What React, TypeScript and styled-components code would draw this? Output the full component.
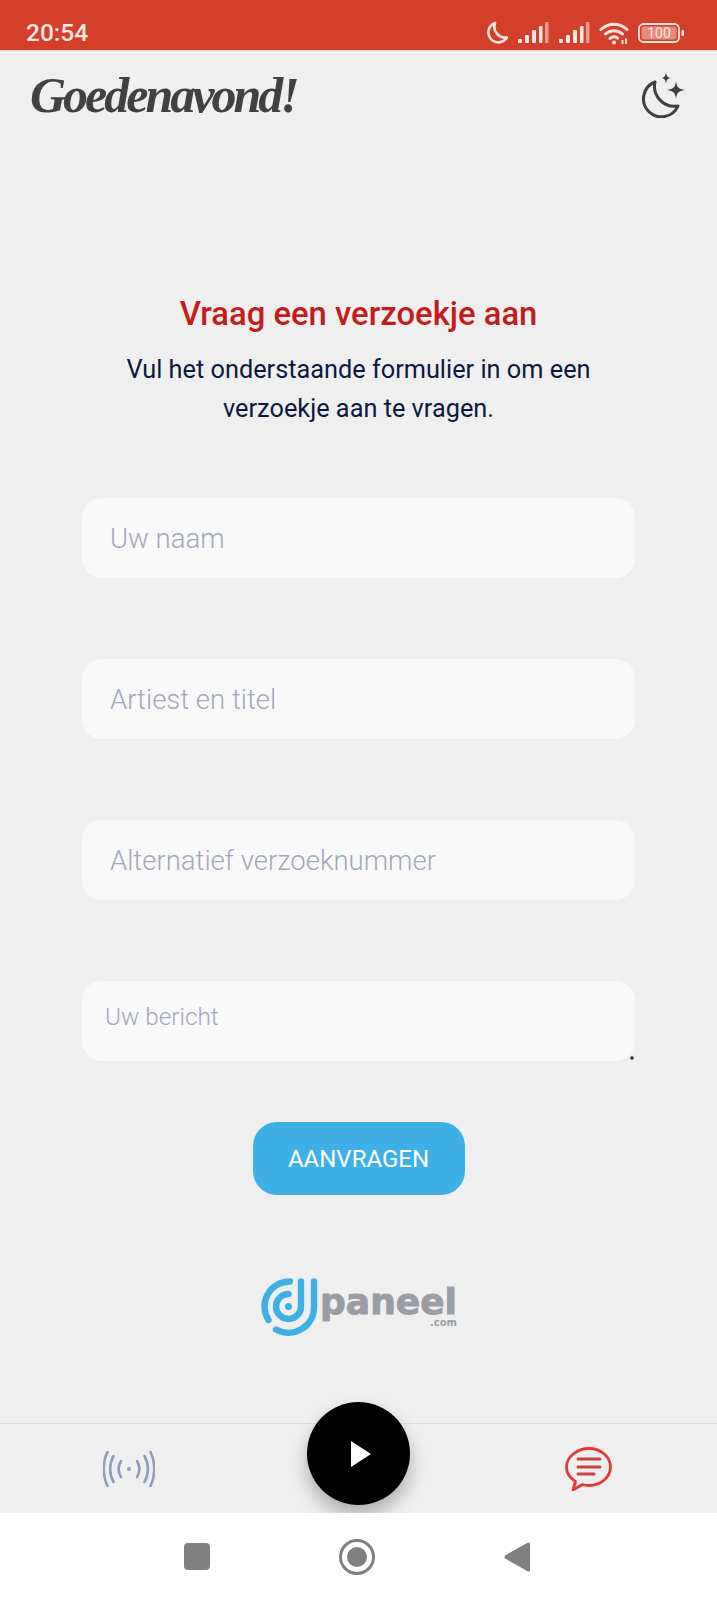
import React from "react";
import styled, { createGlobalStyle } from "styled-components";

const GlobalStyle = createGlobalStyle`
  * { box-sizing: border-box; }
  body {
    margin: 0;
    background: #efefef;
    font-family: Roboto, "Liberation Sans", sans-serif;
  }
`;

const Page = styled.div`
  width: 717px;
  height: 1600px;
  display: flex;
  flex-direction: column;
  background: #efefef;
  overflow: hidden;
`;

const StatusBar = styled.div`
  height: 51px;
  flex: none;
  padding: 15px 33px 0 26px;
  display: flex;
  align-items: center;
  justify-content: space-between;
  background: #d23f2b;
  border-bottom: 1px solid #f0c9c0;
  color: #fbe6df;
`;

const Clock = styled.span`
  font-size: 24.5px;
  font-weight: 500;
`;

const StatusIcons = styled.div`
  display: flex;
  align-items: center;
  gap: 9px;
`;

const Header = styled.header`
  height: 90px;
  flex: none;
  padding: 0 31px 2px 30px;
  display: flex;
  align-items: center;
  justify-content: space-between;
`;

const Greeting = styled.h1`
  margin: 0;
  font-family: "Liberation Serif", serif;
  font-size: 50px;
  font-style: italic;
  font-weight: 700;
  letter-spacing: -3px;
  color: #414141;
`;

const Main = styled.main`
  flex: 1;
  padding-top: 154px;
  display: flex;
  flex-direction: column;
  align-items: center;
`;

const Title = styled.h2`
  margin: 0 0 17px;
  font-size: 32.8px;
  line-height: 38px;
  font-weight: 500;
  color: #c41c1c;
`;

const Intro = styled.p`
  width: 500px;
  margin: 0 0 70px;
  font-size: 25.3px;
  line-height: 39px;
  text-align: center;
  color: #0c1a3e;
`;

const Form = styled.form`
  width: 553px;
  display: flex;
  flex-direction: column;
  align-items: center;
  gap: 81px;
`;

const TextInput = styled.input`
  width: 100%;
  height: 80px;
  padding: 0 28px;
  border: 0;
  border-radius: 20px;
  background: #f9f9f9;
  font-family: Roboto, sans-serif;
  font-size: 27.5px;
  font-weight: 300;
  outline: none;

  &::placeholder {
    color: #a2a8ba;
    opacity: 1;
  }
`;

const TextArea = styled.textarea`
  display: block;
  width: 100%;
  height: 80px;
  padding: 21px 23px;
  border: 0;
  border-radius: 20px;
  background: #f9f9f9;
  font-family: Roboto, sans-serif;
  font-size: 24.3px;
  font-weight: 300;
  outline: none;

  &::placeholder {
    color: #a2a8ba;
    opacity: 1;
  }

  &::-webkit-resizer {
    background: radial-gradient(circle at 12px 12px, #444 0 1.5px, transparent 2px);
  }
`;

const SubmitButton = styled.button`
  width: 212px;
  height: 73px;
  margin-top: -20px;
  border: 0;
  border-radius: 24px;
  background: #3eb0e6;
  color: #fff;
  font-family: Roboto, sans-serif;
  font-size: 24px;
  font-weight: 400;
`;

const Brand = styled.div`
  margin-top: 82px;
  display: flex;
  align-items: flex-start;
  gap: 2px;
`;

const BrandText = styled.div`
  display: flex;
  flex-direction: column;
  align-items: flex-end;
  padding-top: 11px;
  font-family: "DejaVu Sans", sans-serif;
  font-weight: 700;
  color: #9a9da3;
`;

const BrandName = styled.span`
  font-size: 36px;
  line-height: 27px;
  -webkit-text-stroke: 1px #9a9da3;
`;

const BrandDomain = styled.span`
  margin-top: 3px;
  font-size: 10px;
  line-height: 10px;
`;

const TabBar = styled.nav`
  position: relative;
  height: 90px;
  flex: none;
  padding: 0 105px 8px 103px;
  display: flex;
  align-items: flex-end;
  justify-content: space-between;
  border-top: 1px solid #dfdfdf;
`;

const TabIcon = styled.div`
  height: 56px;
  padding-bottom: 16px;
  display: flex;
  align-items: center;
`;

const PlayButton = styled.button`
  position: absolute;
  left: 307px;
  top: -22px;
  width: 103px;
  height: 103px;
  padding: 0 0 0 4px;
  border: 0;
  border-radius: 50%;
  display: flex;
  align-items: center;
  justify-content: center;
  background: #000;
  box-shadow: 0 10px 18px rgba(0, 0, 0, 0.28);
`;

const SystemNav = styled.div`
  position: relative;
  height: 87px;
  flex: none;
  padding: 0 187px 0 184px;
  display: flex;
  align-items: center;
  justify-content: space-between;
  background: #fff;
`;

const MoonIcon = () => (
  <svg width="23" height="24" viewBox="0 0 23 24" fill="none">
    <path
      d="M10 2A10 10 0 1 0 22 16.500 11 11 0 0 1 10 2Z"
      stroke="currentColor"
      strokeWidth="2.600"
      strokeLinejoin="round"
    />
  </svg>
);

const SignalIcon = () => (
  <svg width="32" height="24" viewBox="0 0 32 24" fill="currentColor">
    <rect x="1" y="18" width="4" height="4" rx="1" />
    <rect x="8" y="14" width="4" height="8" rx="1" />
    <rect x="15" y="9" width="4" height="13" rx="1" />
    <rect x="22" y="5" width="3.500" height="17" rx="1" />
    <rect x="28" y="1" width="3.500" height="21" rx="0.500" fill="#ef9a8a" />
  </svg>
);

const WifiIcon = () => (
  <svg width="30" height="24" viewBox="0 0 30 24" fill="none" stroke="currentColor" strokeWidth="3" strokeLinecap="round">
    <path d="M2 8.500C9.500 1.500 20.500 1.500 28 8.500" />
    <path d="M6.500 13C11.500 8.500 18.500 8.500 23.500 13" />
    <path d="M11 17.500C13.500 15.500 16.500 15.500 18.500 17" />
    <circle cx="15" cy="21.500" r="1.600" fill="currentColor" strokeWidth="1" />
    <path d="M23.500 19V23M27 17.500V23" strokeWidth="2" strokeLinecap="butt" />
  </svg>
);

const BatteryIcon = () => (
  <svg width="46" height="20" viewBox="0 0 46 20" fill="none">
    <rect x="1" y="1" width="40" height="18" rx="4.500" stroke="currentColor" strokeWidth="1.800" />
    <rect x="3.500" y="3.500" width="35" height="13" rx="2.500" fill="#e8897a" />
    <rect x="43.500" y="7" width="2.500" height="6" rx="1" fill="currentColor" />
    <text x="21" y="15" textAnchor="middle" fontFamily="Roboto, sans-serif" fontSize="14" fill="currentColor">
      100
    </text>
  </svg>
);

const ThemeIcon = () => (
  <svg width="46" height="46" viewBox="0 0 46 46" fill="none">
    <path
      d="M15 10A18 18 0 1 0 38 34 20 20 0 0 1 15 10Z"
      stroke="#3f3f3f"
      strokeWidth="3"
      strokeLinejoin="round"
    />
    <path d="M26 0C26.600 4.400 27.400 5.400 31 6 27.400 6.600 26.600 7.600 26 12 25.400 7.600 24.600 6.600 21 6 24.600 5.400 25.400 4.400 26 0Z" fill="#3f3f3f" />
    <path d="M36 9C36.800 15 38 16.800 45 18 38 19.200 36.800 21 36 27 35.200 21 34 19.200 27 18 34 16.800 35.200 15 36 9Z" fill="#3f3f3f" />
  </svg>
);

const BrandMark = () => (
  <svg width="58" height="60" viewBox="0 0 58 60" fill="none" stroke="#3eb0e6" strokeWidth="6.400" strokeLinecap="round">
    <path d="M30 4.500A25 25 0 0 0 8.500 43" />
    <path d="M54 4.500V29.500A25.500 25.500 0 0 1 16 52.500" />
    <path d="M41 4.500V29.500A12.500 12.500 0 1 1 28.500 17" />
    <circle cx="28.500" cy="29.500" r="3.600" fill="#3eb0e6" stroke="none" />
  </svg>
);

const RadioIcon = () => (
  <svg width="52" height="36" viewBox="0 0 52 36" fill="none" stroke="#8c9dbd" strokeWidth="2.600" strokeLinecap="round">
    <circle cx="26" cy="18" r="2" fill="#8c9dbd" stroke="none" />
    <path d="M18 10C15 15 15 21 18 26" />
    <path d="M34 10C37 15 37 21 34 26" />
    <path d="M10.500 5C6 13 6 23 10.500 31" />
    <path d="M41.500 5C46 13 46 23 41.500 31" />
    <path d="M4.500 1C-0.500 11 -0.500 25 4.500 35" />
    <path d="M47.500 1C52.500 11 52.500 25 47.500 35" />
  </svg>
);

const ChatIcon = () => (
  <svg width="47" height="44" viewBox="0 0 47 44" fill="none" stroke="#e53935" strokeLinecap="round">
    <path
      d="M24 1.500C36 1.500 45.500 10 45.500 20S36 38.500 24 38.500C21.500 38.500 19.500 38.200 17.500 37.500L8 43 10.500 34.500C5 31 1.500 26 1.500 20 1.500 10 12 1.500 24 1.500Z"
      strokeWidth="2.800"
      strokeLinejoin="round"
    />
    <path d="M13 12H35M13 20H35M13 27H29" stroke="#c8413d" strokeWidth="3" />
  </svg>
);

const PlayIcon = () => (
  <svg width="20" height="26" viewBox="0 0 20 26" fill="#fff">
    <path d="M0 0L20 13 0 26Z" />
  </svg>
);

const SquareKey = () => (
  <svg width="26" height="27" viewBox="0 0 26 27" fill="#808080">
    <rect width="26" height="27" rx="4" />
  </svg>
);

const HomeKey = () => (
  <svg width="36" height="36" viewBox="0 0 36 36" fill="none">
    <circle cx="18" cy="18" r="16.500" stroke="#808080" strokeWidth="3" />
    <circle cx="18" cy="18" r="10" fill="#808080" />
  </svg>
);

const BackKey = () => (
  <svg width="26" height="30" viewBox="0 0 26 30" fill="#808080">
    <path d="M24 0.500Q26 0 26 2V28Q26 30 24 29.500L1 16.500Q0 15 1 13.500Z" />
  </svg>
);

const App = () => {
  return (
    <Page>
      <GlobalStyle />
      <StatusBar>
        <Clock>20:54</Clock>
        <StatusIcons>
          <MoonIcon />
          <SignalIcon />
          <SignalIcon />
          <WifiIcon />
          <BatteryIcon />
        </StatusIcons>
      </StatusBar>
      <Header>
        <Greeting>Goedenavond!</Greeting>
        <ThemeIcon />
      </Header>
      <Main>
        <Title>Vraag een verzoekje aan</Title>
        <Intro>Vul het onderstaande formulier in om een verzoekje aan te vragen.</Intro>
        <Form>
          <TextInput placeholder="Uw naam" />
          <TextInput placeholder="Artiest en titel" />
          <TextInput placeholder="Alternatief verzoeknummer" />
          <TextArea placeholder="Uw bericht" />
          <SubmitButton type="button">AANVRAGEN</SubmitButton>
        </Form>
        <Brand>
          <BrandMark />
          <BrandText>
            <BrandName>paneel</BrandName>
            <BrandDomain>.com</BrandDomain>
          </BrandText>
        </Brand>
      </Main>
      <TabBar>
        <TabIcon>
          <RadioIcon />
        </TabIcon>
        <PlayButton aria-label="Afspelen">
          <PlayIcon />
        </PlayButton>
        <TabIcon>
          <ChatIcon />
        </TabIcon>
      </TabBar>
      <SystemNav>
        <SquareKey />
        <HomeKey />
        <BackKey />
      </SystemNav>
    </Page>
  );
};

export default App;
